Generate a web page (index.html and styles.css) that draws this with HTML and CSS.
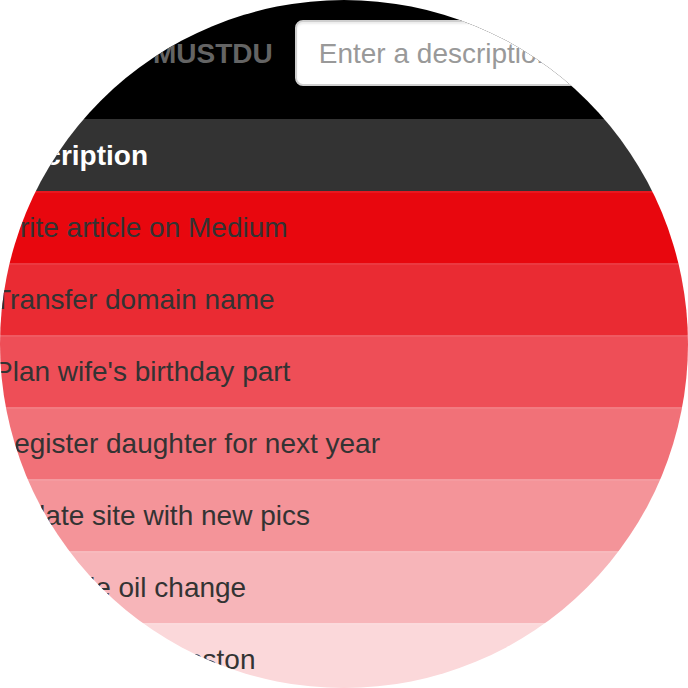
FILE: index.html
```html
<!DOCTYPE html>
<html lang="en">
<head>
<meta charset="utf-8">
<title>MUSTDU</title>
<link rel="stylesheet" href="styles.css">
</head>
<body>
<div class="lens">
  <div class="app">
    <nav class="navbar">
      <span class="brand">MUSTDU</span>
      <input class="desc-input" type="text" placeholder="Enter a description">
    </nav>
    <table class="tasks">
      <thead>
        <tr><th>Description</th></tr>
      </thead>
      <tbody>
        <tr class="p1"><td>Write article on Medium</td></tr>
        <tr class="p2"><td>Transfer domain name</td></tr>
        <tr class="p3"><td>Plan wife's birthday part</td></tr>
        <tr class="p4"><td>Register daughter for next year</td></tr>
        <tr class="p5"><td>Update site with new pics</td></tr>
        <tr class="p6"><td>Schedule oil change</td></tr>
        <tr class="p7"><td>Buy tickets to Boston</td></tr>
      </tbody>
    </table>
  </div>
</div>
</body>
</html>
```
FILE: styles.css
```css
* { box-sizing: border-box; }

html, body {
  margin: 0;
  padding: 0;
  background: #fff;
}

body {
  font-family: "Liberation Sans", Arial, Helvetica, sans-serif;
  width: 688px;
  height: 688px;
  overflow: hidden;
}

.lens {
  width: 688px;
  height: 688px;
  border-radius: 50%;
  overflow: hidden;
  background: #fff;
}

.app {
  width: 780px;
  margin-left: -22px;
}

.navbar {
  background: #000;
  height: 119px;
  display: flex;
  align-items: flex-start;
  gap: 22px;
  padding: 20px 0 0 175px;
}

.brand {
  font-weight: bold;
  font-size: 28px;
  line-height: 68px;
  height: 66px;
  color: #646464;
  white-space: nowrap;
}

.desc-input {
  flex: 1;
  height: 66px;
  margin: 0;
  border: 2px solid #cfcfcf;
  border-radius: 8px;
  background: #fff;
  padding: 2px 22px 0;
  font-family: inherit;
  font-size: 28px;
  color: #555;
  box-shadow: inset 0 2px 2px rgba(0, 0, 0, 0.075);
  outline: none;
}

.desc-input::placeholder {
  color: #999;
}

.tasks {
  width: 100%;
  border-collapse: collapse;
  border-spacing: 0;
}

.tasks th,
.tasks td {
  text-align: left;
  padding: 17px 16px 15px;
  font-size: 28px;
  line-height: 40px;
  height: 72px;
  white-space: nowrap;
}

.tasks th {
  background: #333;
  color: #fff;
  font-weight: bold;
}

.tasks td {
  color: #333;
  box-shadow: inset 0 2px 0 rgba(255, 255, 255, 0.07);
}

.p1 td { background: #e8070e; }
.p2 td { background: #ea2b33; }
.p3 td { background: #ee4e57; }
.p4 td { background: #f17178; }
.p5 td { background: #f49499; }
.p6 td { background: #f7b5b9; }
.p7 td { background: #fbd8da; }
```
